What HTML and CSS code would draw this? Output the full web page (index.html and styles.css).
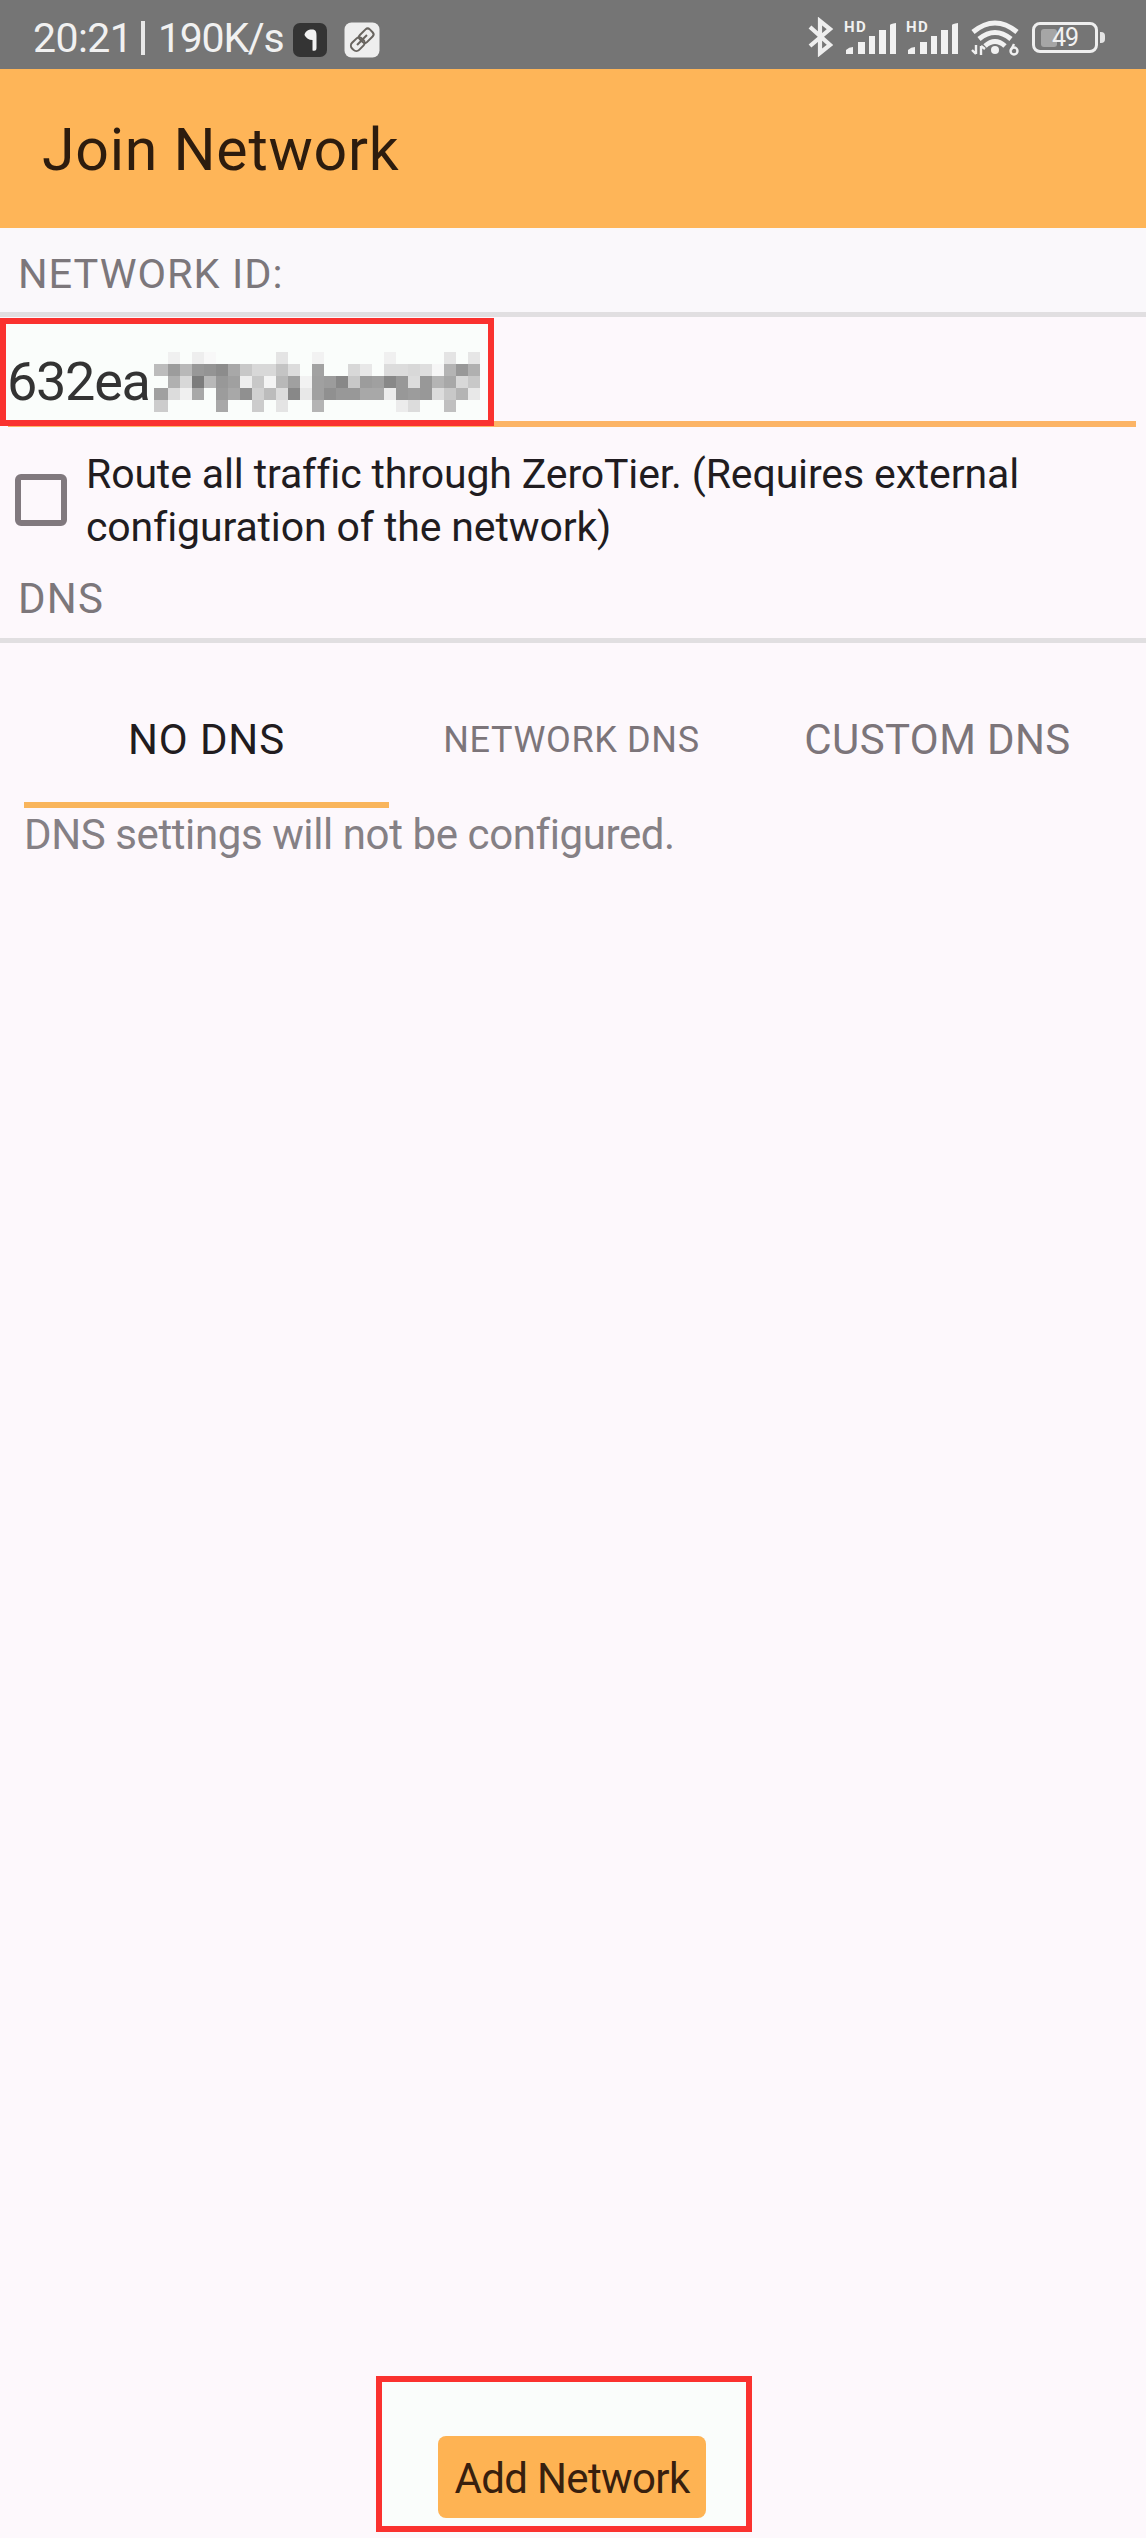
FILE: index.html
```html
<!DOCTYPE html>
<html lang="en">
<head>
<meta charset="utf-8">
<title>Join Network</title>
<link rel="stylesheet" href="styles.css">
</head>
<body>
<div class="screen">
  <div class="status-bar">
    <div class="status-left">
      <span class="clock">20:21</span>
      <span class="separator"></span>
      <span class="speed">190K/s</span>
      <svg class="badge" width="36" height="36" viewBox="0 0 36 36">
        <rect x="1" y="1" width="34" height="34" rx="7" fill="#343434"/>
        <path d="M12.500 13C13 9.500 16 7.500 20 7.500C24 7.500 24.500 10 24.500 14V26C24.500 29 22.500 29 20.500 28.500V18Q15 18 12.500 13Z" fill="#f2f2f2"/>
      </svg>
      <svg class="badge" width="36" height="36" viewBox="0 0 36 36">
        <rect x="0.500" y="0.500" width="35" height="35" rx="7" fill="#eeeeee"/>
        <g transform="rotate(-45 18 18)" fill="none" stroke="#68645f" stroke-width="2">
          <rect x="5" y="13" width="14" height="10" rx="4"/>
          <rect x="17" y="13" width="14" height="10" rx="3"/>
          <path d="M11 18H25"/>
        </g>
      </svg>
    </div>
    <div class="status-right">
      <svg class="bluetooth" width="26" height="40" viewBox="0 0 26 40" fill="none" stroke="#eeeeee" stroke-width="4.200">
        <path d="M2 10L22 28L12 36V4L22 12L2 29"/>
      </svg>
      <div class="signal">
        <span class="hd">HD</span>
        <svg width="52" height="32" viewBox="0 0 52 32" fill="#f1f1f1">
          <path d="M2 31V27Q5 24 9 24V31ZM14 19H21V31H14ZM25 13H31V31H25ZM35 7H42V31H35ZM46 2Q46 1 52 0V31H46Z"/>
        </svg>
      </div>
      <div class="signal">
        <span class="hd">HD</span>
        <svg width="52" height="32" viewBox="0 0 52 32" fill="#f1f1f1">
          <path d="M2 31V27Q5 24 9 24V31ZM14 19H21V31H14ZM25 13H31V31H25ZM35 7H42V31H35ZM46 2Q46 1 52 0V31H46Z"/>
        </svg>
      </div>
      <svg class="wifi" width="50" height="38" viewBox="0 0 50 38" fill="none" stroke="#f1f1f1">
        <path d="M3 13Q25 -5 47 13" stroke-width="5"/>
        <path d="M9 20Q25 7 41 20" stroke-width="5"/>
        <path d="M15 27Q25 18 35 27" stroke-width="5"/>
        <circle cx="25" cy="31" r="4" fill="#f1f1f1" stroke="none"/>
        <path d="M6 26V35M2 31L6 35M11 36V27M11 27L15 30" stroke-width="2.400"/>
        <circle cx="44" cy="32" r="3.500" stroke-width="2.400"/>
        <path d="M41 31L44 25" stroke-width="2.400"/>
      </svg>
      <div class="battery">
        <div class="battery-body"><span class="battery-level"></span><span class="battery-text">49</span></div>
        <span class="battery-tip"></span>
      </div>
    </div>
  </div>

  <header class="app-bar"><h1 class="title">Join Network</h1></header>

  <main class="content">
    <h2 class="section-title section-id">NETWORK ID:</h2>
    <div class="id-field">
      <div class="highlight highlight-id"></div>
      <span class="id-value">632ea</span>
      <svg class="mosaic" id="mosaic" width="326" height="60" viewBox="0 0 326 60" shape-rendering="crispEdges"></svg>
      <div class="underline"></div>
    </div>
    <label class="route">
      <span class="checkbox"></span>
      <span class="route-text">Route all traffic through ZeroTier. (Requires external<br>configuration of the network)</span>
    </label>
    <h2 class="section-title section-dns">DNS</h2>
    <div class="tabs">
      <div class="tab tab-active">NO DNS</div>
      <div class="tab tab-small">NETWORK DNS</div>
      <div class="tab tab-custom">CUSTOM DNS</div>
    </div>
    <p class="description">DNS settings will not be configured.</p>
  </main>

  <footer class="footer">
    <div class="highlight highlight-add"></div>
    <button class="add-button">Add Network</button>
  </footer>
</div>
<script src="mosaic.js"></script>
</body>
</html>
```

FILE: mosaic.js
```js
// Pixelated mask over the private part of the network ID.
// Each pair of hex digits is the grey level of one 12px cell; ".." is empty.
const rows = [
  '..f0..eef8..........e4....f2..........f0........e4..e6',
  'bc9cb898948ca8c8d8d8c4dc..a2....d8e8..dcdcd8def6b498b0',
  '..b0d87cb898a0eec8f4b8a0f2a09c88c89ca08898dc98b4a8d8c8',
  'a0dcf0a8..9ca890d0bcdc88e8a0909898a8a8ec989c98dcc8b4e8',
  'cc........a8....cc..e4....b4............ecdc....c0....'
];
const svg = document.getElementById('mosaic');
rows.forEach((row, y) => {
  row.match(/../g).forEach((level, x) => {
    if (level === '..') return;
    const cell = document.createElementNS('http://www.w3.org/2000/svg', 'rect');
    cell.setAttribute('x', x ? x * 12 + 2 : 0);
    cell.setAttribute('y', y * 12);
    cell.setAttribute('width', x ? 12 : 14);
    cell.setAttribute('height', 12);
    cell.setAttribute('fill', '#' + level.repeat(3));
    svg.appendChild(cell);
  });
});
```

FILE: styles.css
```css
* { box-sizing: border-box; }

body {
  margin: 0;
  background: #fdf8fc;
  font-family: Roboto, "Noto Sans", sans-serif;
  color: #211c20;
}

h1, h2, p { margin: 0; font-weight: 400; }

svg { display: block; flex: none; }

.screen {
  display: flex;
  flex-direction: column;
  width: 1146px;
  height: 2538px;
  overflow: hidden;
  white-space: nowrap;
}

/* Status bar */
.status-bar {
  display: flex;
  justify-content: space-between;
  height: 69px;
  padding: 0 41px 0 33px;
  background: #757575;
  color: #f1f1f1;
}

.status-left { display: flex; align-items: center; padding-top: 7px; font-size: 41px; line-height: 62px; }
.clock { width: 108px; letter-spacing: -0.6px; }
.separator { width: 4px; height: 34px; margin-right: 13px; background: #e8e8e8; }
.speed { width: 134px; letter-spacing: -1.25px; }
.badge { margin-top: 3px; }
.badge + .badge { margin-left: 16px; }

.status-right { display: flex; align-items: flex-start; }
.bluetooth { margin: 17px 10px 0 0; }
.signal { position: relative; width: 52px; margin: 23px 10px 0 0; }
.signal + .signal { margin-right: 12px; }
.hd { position: absolute; left: 0; top: -3px; font-size: 15px; font-weight: 700; line-height: 15px; letter-spacing: 1.5px; }
.wifi { margin: 19px 12px 0 0; }
.battery { display: flex; align-items: center; gap: 2px; margin-top: 22px; }
.battery-body { display: flex; align-items: center; width: 66px; height: 31px; padding-left: 6px; border: 3px solid #efefef; border-radius: 8px; }
.battery-level { width: 16px; height: 18px; border-radius: 3px; background: #a6a6a6; }
.battery-text { margin-left: -5px; font-size: 25px; line-height: 26px; letter-spacing: -1px; }
.battery-tip { width: 5px; height: 11px; border-radius: 0 4px 4px 0; background: #e4e4e4; }

/* App bar */
.app-bar { height: 159px; padding: 2px 0 0 42px; background: #feb558; }
.title { font-size: 59px; line-height: 158px; letter-spacing: 0.75px; color: #2d1c0e; }

/* Form */
.section-title { padding-left: 18px; border-bottom: 5px solid #e1dfe1; color: #7c777b; }
.section-id { height: 89px; padding-top: 6px; background: #faf8fb; font-size: 41.5px; line-height: 80px; letter-spacing: 1px; }

.id-field { position: relative; display: flex; height: 109px; padding: 25px 0 0 7px; }
.id-value { position: relative; width: 147px; font-size: 54px; line-height: 80px; letter-spacing: -1.3px; color: #333333; }
.mosaic { position: relative; margin-top: 10px; }
.underline { position: absolute; left: 8px; right: 10px; bottom: -1px; height: 6px; background: #fcb466; }

.highlight { position: absolute; z-index: 1; border: 6px solid #fa322f; }
.highlight-id { left: 0; top: 1px; width: 494px; height: 108px; background: #fafdfb; }
.id-value, .mosaic { z-index: 2; }

.route { display: flex; align-items: center; height: 128px; padding: 22px 0 0 15px; }
.checkbox { width: 52px; height: 52px; margin: -3px 19px 0 0; border: 6px solid #81797e; border-radius: 6px; }
.route-text { font-size: 41px; line-height: 53px; letter-spacing: -0.13px; }

.section-dns { height: 89px; padding-top: 4px; font-size: 42px; line-height: 81px; letter-spacing: 1.2px; }

.tabs { display: grid; grid-template-columns: repeat(3, 365px); height: 165px; padding: 34px 24px 0; }
.tab { height: 131px; border-bottom: 6px solid transparent; text-align: center; font-size: 42px; line-height: 126px; letter-spacing: 0.4px; color: #7c757a; }
.tab-active { border-color: #f9b55c; letter-spacing: 0.9px; color: #211c20; }
.tab-small { font-size: 36px; letter-spacing: 0.65px; }
.tab-custom { padding-left: 2px; }

.description { padding: 1px 0 0 24px; font-size: 42px; line-height: 52px; letter-spacing: -0.4px; color: #858085; }

/* Bottom action */
.footer { position: relative; display: flex; margin-top: auto; padding: 0 0 20px 438px; }
.highlight-add { left: 376px; bottom: 6px; width: 376px; height: 156px; background: #fafdfb; }
.add-button {
  position: relative;
  z-index: 2;
  width: 268px;
  height: 82px;
  padding: 2px 0 0;
  border: 0;
  border-radius: 8px;
  background: #feb353;
  color: #38200e;
  font-family: inherit;
  font-size: 42px;
  letter-spacing: -0.65px;
}
```
